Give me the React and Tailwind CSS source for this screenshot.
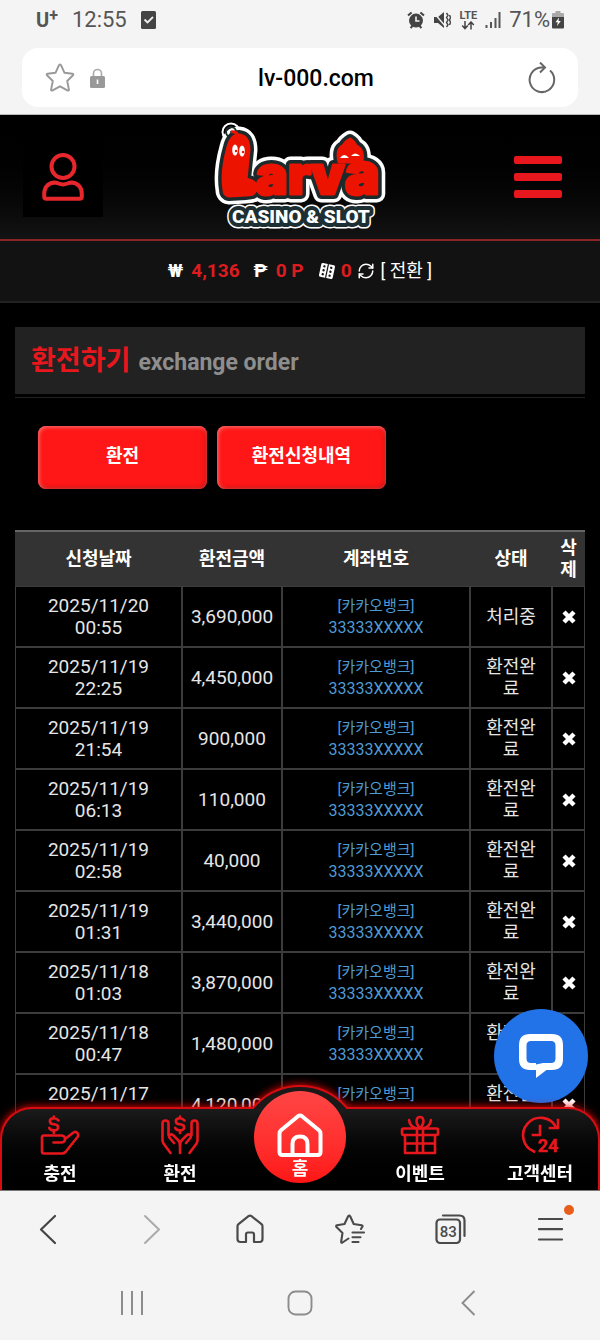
import { LuRefreshCw } from "react-icons/lu"

const rows = [
  { date: "2025/11/20", time: "00:55", amount: "3,690,000", status: "처리중" },
  { date: "2025/11/19", time: "22:25", amount: "4,450,000", status: "환전완료" },
  { date: "2025/11/19", time: "21:54", amount: "900,000", status: "환전완료" },
  { date: "2025/11/19", time: "06:13", amount: "110,000", status: "환전완료" },
  { date: "2025/11/19", time: "02:58", amount: "40,000", status: "환전완료" },
  { date: "2025/11/19", time: "01:31", amount: "3,440,000", status: "환전완료" },
  { date: "2025/11/18", time: "01:03", amount: "3,870,000", status: "환전완료" },
  { date: "2025/11/18", time: "00:47", amount: "1,480,000", status: "환전완료" },
  { date: "2025/11/17", time: "23:12", amount: "4,120,000", status: "환전완료" },
]

function StatusBar() {
  return (
    <div className="flex h-10 items-center justify-between px-9 text-[#555]">
      <div className="flex items-center gap-[14px]">
        <span className="flex items-start text-xl font-bold leading-6">
          U<span className="text-base leading-4">+</span>
        </span>
        <span className="text-[22px] leading-6">12:55</span>
        <svg viewBox="0 0 15 18" className="h-[18px] w-[15px]">
          <rect width="15" height="18" rx="1.5" fill="#444" />
          <path d="M3.5 8.5l3 3 5.5-5.5" fill="none" stroke="#eee" strokeWidth="1.8" />
        </svg>
      </div>

      <div className="flex items-center gap-2">
        <svg viewBox="0 0 18 18" className="h-[18px] w-[18px]">
          <circle cx="9" cy="9.6" r="7" fill="#444" />
          <path d="M1 4.6L4.6 1.4M17 4.6L13.4 1.4M3.5 17l2-2M14.5 17l-2-2" stroke="#444" strokeWidth="2" />
          <path d="M9 5.5V10h3.5" fill="none" stroke="#f4f4f4" strokeWidth="1.6" />
        </svg>
        <svg viewBox="0 0 18 18" className="h-[18px] w-[18px]">
          <path d="M1 6h4l6-5v16l-6-5H1z" fill="#444" />
          <path d="M1 2l12 14" stroke="#f4f4f4" strokeWidth="1.4" />
          <path d="M13.5 2l1.5 2.3-1.5 2.3L15 9l-1.5 2.4L15 13.8 13.5 16M16.5 4l1 2.5-1 2.5 1 2.5-1 2.5" fill="none" stroke="#444" strokeWidth="1.4" />
        </svg>
        <div className="flex flex-col items-center text-[11px] font-bold leading-[10px]">
          LTE
          <svg viewBox="0 0 14 9" className="h-[9px] w-[14px]">
            <path d="M4 0v7M1.2 4.6L4 7.6l2.8-3M10 8.5V1.5M7.2 4L10 1l2.8 3" fill="none" stroke="#444" strokeWidth="1.5" />
          </svg>
        </div>
        <svg viewBox="0 0 16 16" className="h-4 w-4">
          <path d="M1.5 16v-3M6 16v-6M10.5 16V6M14.5 16V0" stroke="#555" strokeWidth="2" />
        </svg>
        <span className="flex items-center gap-[2px] text-[22px] leading-6">
          71%
          <svg viewBox="0 0 12 18" className="h-[18px] w-3">
            <path d="M3.5 0h5v2H11q1 0 1 1v4H0V3q0-1 1-1h2.5z" fill="#aaa" />
            <path d="M0 6h12v10.5q0 1-1 1H1q-1 0-1-1z" fill="#444" />
            <path d="M7 6.5l-3.5 4.7h2.3L5 15l3.8-5H6.5z" fill="#fff" />
          </svg>
        </span>
      </div>
    </div>
  )
}

function AddressBar() {
  return (
    <div className="border-b border-[#bbb] px-[22px] pb-[7px] pt-2">
      <div className="flex h-[59px] items-center justify-between rounded-2xl bg-white px-[22px]">
        <div className="flex w-28 items-center gap-[14px]">
          <button aria-label="즐겨찾기">
            <svg viewBox="0 0 32 32" className="h-8 w-8">
              <path
                d="M16 2.500q.8 0 1.200 1l3.300 7.300 8 1q1.400.3.500 1.500L23.200 19l1.700 8.400q0 1.700-1.500 1L16 24.300 8.600 28.400q-1.500.7-1.500-1L8.800 19 3 13.300q-.9-1.200.5-1.500l8-1 3.300-7.300q.4-1 1.200-1z"
                fill="none" stroke="#999" strokeWidth="1.9" strokeLinejoin="round"
              />
            </svg>
          </button>
          <svg viewBox="0 0 15 20" className="h-5 w-[15px]">
            <path d="M3.5 9V5.5a4 4 0 018 0V9" fill="none" stroke="#aaa" strokeWidth="1.6" />
            <rect y="8" width="15" height="12" rx="1.5" fill="#999" />
            <path d="M7.5 11.5v4.5" stroke="#fff" strokeWidth="1.6" />
          </svg>
        </div>
        <span className="pt-[2px] text-[23px] font-medium leading-7 text-black">lv-000.com</span>
        <div className="flex w-20 justify-end">
          <button aria-label="새로고침">
            <svg viewBox="0 0 32 32" className="h-8 w-8" fill="none" stroke="#666" strokeWidth="2">
              <path d="M26 8.5A12.3 12.3 0 1117 5.5h3.500" />
              <path d="M16 .5l5 5-5 5" />
            </svg>
          </button>
        </div>
      </div>
    </div>
  )
}

function Logo() {
  return (
    <svg viewBox="0 0 176 110" className="h-[110px] w-44 overflow-visible" role="img" aria-label="Larva Casino & Slot">
      <defs>
        <path id="larva-bud" d="M127 40Q124 27 131 24 133 20 138 17 143 20 144 24 152 27 150 40z" />
        <path id="larva-body" d="M12 68Q9 50 16 25 19 13 27 13 37 14 37 28L34 57 40 59Q46 62 44 68 42 73 34 73L17 74Q12 73 12 68z" />
      </defs>
      <g fontFamily="Inter, sans-serif" fontWeight="900" strokeLinejoin="round">
        {/* outlines are the same shapes with thicker strokes */}
        <g fill="#fff" stroke="#fff" strokeWidth="17">
          <circle cx="19" cy="10" r="1" />
          <use href="#larva-bud" />
          <use href="#larva-body" />
          <use href="#larva-letters" />
        </g>
        <g fill="#1d2a2c" stroke="#1d2a2c" strokeWidth="10">
          <circle cx="19" cy="10" r="1" />
          <use href="#larva-bud" />
          <use href="#larva-body" />
          <use href="#larva-letters" />
        </g>
        <g fill="#ec1400" stroke="#ec1400" strokeWidth="3">
          <use href="#larva-bud" />
          <text id="larva-letters">
            <tspan x="13" y="72" fontSize="52">L</tspan>
            <tspan x="44" y="72" fontSize="53">a</tspan>
            <tspan x="76" y="72" fontSize="53">r</tspan>
            <tspan x="99" y="72" fontSize="53">v</tspan>
            <tspan x="133" y="72" fontSize="58">a</tspan>
          </text>
          <use href="#larva-body" />
          <path d="M26 15q-1-6-7-5" fill="none" />
        </g>
      </g>
      <g fill="#fff">
        <ellipse cx="23" cy="28" rx="2.8" ry="5.5" />
        <ellipse cx="30" cy="29" rx="2.8" ry="5.5" />
        <path d="M128 36q4-6 9 0zM139 34q4-5 9 0z" />
      </g>
      <circle cx="24" cy="29" r="1.2" fill="#ec1400" />
      <circle cx="31" cy="30" r="1.2" fill="#ec1400" />
      <g fontFamily="Roboto, sans-serif" fontWeight="900" fontSize="19" strokeLinejoin="round">
        <use href="#larva-sub" fill="#fff" stroke="#fff" strokeWidth="11" />
        <use href="#larva-sub" fill="#1d2f33" stroke="#1d2f33" strokeWidth="8" />
        <g fill="#fff">
          <text id="larva-sub" x="20" y="101">CASINO &amp; SLOT</text>
        </g>
      </g>
    </svg>
  )
}

function Header() {
  return (
    <header className="grid h-[126px] grid-cols-[1fr_auto_1fr] items-center border-b-2 border-[#8a2424] bg-gradient-to-b from-black to-[#131313] px-[23px]">
      <button aria-label="내 정보" className="flex h-20 w-20 items-center justify-center bg-black">
        <svg viewBox="0 0 42 48" className="h-12 w-[42px]" fill="none" stroke="#e8272d" strokeWidth="4">
          <ellipse cx="21" cy="13.500" rx="11.500" ry="11.500" />
          <path d="M12 29.500q-9.800 1.500-9.800 12v2q0 2.300 2.300 2.300h33q2.300 0 2.300-2.300v-2q0-10.500-9.800-12-2.500 0-4.500 1-4.500 1.800-9 0-2-1-4.500-1z" />
        </svg>
      </button>
      <Logo />
      <button aria-label="메뉴" className="mr-[15px] flex w-12 flex-col gap-[9px] justify-self-end">
        <span className="h-2 rounded-xs bg-[#e8171d]" />
        <span className="h-2 rounded-xs bg-[#e8171d]" />
        <span className="h-2 rounded-xs bg-[#e8171d]" />
      </button>
    </header>
  )
}

function BalanceBar() {
  return (
    <div className="flex h-[62px] items-center justify-center gap-[14px] border-b-2 border-[#222] bg-[#121212] text-[19px] font-bold leading-6 text-[#dd1c1f]">
      <span className="flex items-center gap-2">
        <span className="text-white">₩</span>4,136
      </span>
      <span className="flex items-center gap-2">
        <span className="text-white">₱</span>0 P
      </span>
      <span className="flex items-center gap-[5px]">
        <svg viewBox="0 0 18 18" className="h-[18px] w-[18px]">
          <g transform="rotate(12 9 9)">
            <rect x="2" y="2" width="14" height="14" rx="1.5" fill="#fff" />
            <path d="M9 2v14" stroke="#121212" strokeWidth="1.2" />
            <g fill="#121212">
              <circle cx="5.5" cy="5" r="1.2" />
              <circle cx="5.5" cy="9" r="1.2" />
              <circle cx="5.5" cy="13" r="1.2" />
              <circle cx="12.5" cy="5" r="1.2" />
              <circle cx="12.5" cy="9" r="1.2" />
              <circle cx="12.5" cy="13" r="1.2" />
            </g>
          </g>
        </svg>
        0
        <button className="flex items-center gap-[6px] font-normal text-white">
          <LuRefreshCw className="h-[18px] w-[18px]" />
          <span className="text-lg leading-6">[ 전환 ]</span>
        </button>
      </span>
    </div>
  )
}

function HistoryTable() {
  return (
    <table className="mt-[41px] w-full table-fixed border-separate border-spacing-0 text-center text-white">
      <colgroup>
        <col className="w-[167px]" />
        <col className="w-[100px]" />
        <col className="w-[188px]" />
        <col className="w-[82px]" />
        <col className="w-[33px]" />
      </colgroup>
      <thead className="bg-[#333] text-lg leading-[22px]">
        <tr className="h-14">
          <th className="border-t-2 border-[#666] font-bold">신청날짜</th>
          <th className="border-t-2 border-[#666] font-bold">환전금액</th>
          <th className="border-t-2 border-[#666] font-bold">계좌번호</th>
          <th className="border-t-2 border-[#666] font-bold">상태</th>
          <th className="border-t-2 border-[#666] px-1 font-bold">삭제</th>
        </tr>
      </thead>
      <tbody className="text-[19px] leading-[22px] text-[#e6e6e6]">
        {rows.map((row) => (
          <tr key={row.date + row.time} className="h-[61px]">
            <td className="border border-[#3c3c3c]">
              {row.date}
              <br />
              {row.time}
            </td>
            <td className="border border-[#3c3c3c]">{row.amount}</td>
            <td className="border border-[#3c3c3c] text-[15px] text-[#4f9bd3]">
              [카카오뱅크]
              <br />
              <span className="text-base leading-[22px]">33333XXXXX</span>
            </td>
            <td className="break-all border border-[#3c3c3c] px-3 text-lg leading-[22px]">{row.status}</td>
            <td className="border border-[#3c3c3c]">
              <button aria-label="삭제" className="block w-full">
                <svg viewBox="0 0 14 14" className="mx-auto h-[14px] w-[14px]">
                  <path d="M2 2l10 10M12 2L2 12" stroke="#fff" strokeWidth="4.4" />
                </svg>
              </button>
            </td>
          </tr>
        ))}
      </tbody>
    </table>
  )
}

/* Bottom menu icons */
const ChargeIcon = () => (
  <svg viewBox="0 0 40 40" className="h-10 w-10" fill="none" stroke="#e8171d" strokeWidth="2.6" strokeLinecap="round" strokeLinejoin="round">
    <path d="M18.5 5.5Q17 3.3 14 3.3c-5.5 0-5.5 5.7 0 6s5.5 6-.3 6q-3.2 0-4.500-2.500M13.800 1.500v1.800M13.800 15.300V18" />
    <path d="M13.500 27.500h7.500q4 0 4-3.500t-4-3.500H4q-2 0-2 2v14q0 2 2 2h18q2 0 3.500-1.500L37.500 22c2-3-1-6.500-4-4.500L25 24" />
  </svg>
)

const WithdrawIcon = () => (
  <svg viewBox="0 0 40 40" className="h-10 w-10" fill="none" stroke="#e8171d" strokeWidth="2.6" strokeLinecap="round" strokeLinejoin="round">
    <path d="M24.500 5.500Q23 3.300 20 3.300c-5.500 0-5.500 5.700 0 6s5.500 6-.3 6q-3.200 0-4.500-2.500M20 1.500v1.800M20 15.300V18" />
    <path d="M20 38v-8q0-3-2-5l-5-5c-2.500-2-5 1-3.300 3l4.300 5M8.500 20V8.500q0-3-3-3t-3 3V25q0 2 1 3.500l7 9.500" />
    <path d="M20 30q0-3 2-5l5-5c2.500-2 5 1 3.300 3L26 28M31.500 20V8.500q0-3 3-3t3 3V25q0 2-1 3.500l-7 9.500" />
  </svg>
)

const HomeIcon = () => (
  <svg viewBox="0 0 46 44" className="h-11 w-[46px]" fill="none" stroke="#fff" strokeWidth="4" strokeLinejoin="round">
    <path d="M2.500 20.500q0-2 1.500-3.300L21 3.200q2-1.500 4 0l17 14q1.500 1.300 1.500 3.300V39q0 3-3 3h-35q-3 0-3-3z" />
    <path d="M15.500 42V31q0-7.500 7.500-7.500t7.500 7.500v11" />
  </svg>
)

const GiftIcon = () => (
  <svg viewBox="0 0 40 40" className="h-10 w-10" fill="none" stroke="#e8171d" strokeWidth="2.6" strokeLinecap="round" strokeLinejoin="round">
    <rect x="2" y="13.500" width="36" height="6.500" rx="1.500" />
    <path d="M5 20v18h30V20M5 28.500h30M17 13.500V38M23 13.500V38" />
    <path d="M20 13.500c-6-7-3-11.500 0-11.500s6 4.500 0 11.500M9 5q1 7 8 8.500M31 5q-1 7-8 8.500" />
  </svg>
)

const SupportIcon = () => (
  <svg viewBox="0 0 40 40" className="h-10 w-10 overflow-visible" fill="none" stroke="#e8171d" strokeWidth="2.6" strokeLinecap="square">
    <path d="M14 36.500A17.500 17.500 0 1136 12" />
    <path d="M38 5v8h-8" />
    <path d="M20 11v9h-7" />
    <text x="18" y="37" fill="#e8171d" stroke="#e8171d" strokeWidth="0.5" fontSize="18" fontWeight="700" fontFamily="Roboto, sans-serif">24</text>
  </svg>
)

const menu = [
  { label: "충전", icon: ChargeIcon },
  { label: "환전", icon: WithdrawIcon },
  { label: "홈", icon: HomeIcon, home: true },
  { label: "이벤트", icon: GiftIcon },
  { label: "고객센터", icon: SupportIcon },
]

function BottomMenu() {
  return (
    <nav className="absolute inset-x-0 bottom-0 h-[83px] drop-shadow-[0_0_4px_#ff0000]">
      {/* red rim with the bump in the middle */}
      <div className="absolute inset-0 rounded-t-[32px] bg-[#d80c10]" />
      <div className="absolute -top-[22px] left-1/2 h-[124px] w-[124px] -translate-x-1/2 rounded-full border-2 border-[#d80c10] bg-[#1c1818]" />
      <div className="absolute inset-x-[2px] bottom-0 top-[2px] rounded-t-[30px] bg-gradient-to-b from-[#1b1b1b] to-black" />

      <div className="relative grid h-full grid-cols-5">
        {menu.map(({ label, icon: Icon, home }) =>
          home ? (
            <a key={label} href="#home" className="relative flex justify-center text-lg font-bold leading-6 text-white">
              <span className="absolute -top-4 flex h-[92px] w-[92px] flex-col items-center rounded-full bg-gradient-to-b from-[#ff4545] to-[#ff1414] pt-[22px]">
                <Icon />
                <span className="leading-6">{label}</span>
              </span>
            </a>
          ) : (
            <a key={label} href={"#" + label} className="flex flex-col items-center gap-[7px] pt-2 text-lg font-bold leading-6 text-white">
              <Icon />
              <span>{label}</span>
            </a>
          )
        )}
      </div>
    </nav>
  )
}

function ChatButton() {
  return (
    <button aria-label="채팅 상담" className="absolute bottom-[87px] right-3 flex h-[94px] w-[94px] items-center justify-center rounded-full bg-[#2272e8]">
      <svg viewBox="0 0 44 44" className="h-11 w-11">
        <path
          d="M11 0h22q11 0 11 11v14q0 11-11 11h-5.500L17 44v-8h-6Q0 36 0 25V11Q0 0 11 0zM12 7q-4.500 0-4.500 4.500v13Q7.500 29 12 29h5v1.500L24 29h8q4.500 0 4.500-4.500v-13Q36.500 7 32 7z"
          fill="#fff" fillRule="evenodd"
        />
      </svg>
    </button>
  )
}

function BrowserBar() {
  return (
    <div className="grid h-[76px] grid-cols-6 items-center justify-items-center border-t border-[#777]">
      <button aria-label="뒤로">
        <svg viewBox="0 0 32 32" className="h-8 w-8" fill="none" stroke="#444" strokeWidth="2.2" strokeLinecap="round" strokeLinejoin="round">
          <path d="M21 3L7 16.500 21 30" />
        </svg>
      </button>
      <button aria-label="앞으로">
        <svg viewBox="0 0 32 32" className="h-8 w-8" fill="none" stroke="#aaa" strokeWidth="2" strokeLinecap="round" strokeLinejoin="round">
          <path d="M11 3l14 13.500L11 30" />
        </svg>
      </button>
      <button aria-label="홈">
        <svg viewBox="0 0 32 32" className="h-8 w-8" fill="none" stroke="#4a4a4a" strokeWidth="2.2" strokeLinejoin="round">
          <path d="M3.500 13.500q0-1.500 1-2.300l10-8q1.500-1.200 3 0l10 8q1 .8 1 2.300V26q0 3-3 3h-5.500v-7.500q0-2-2-2h-4q-2 0-2 2V29H6.500q-3 0-3-3z" />
        </svg>
      </button>
      <button aria-label="북마크">
        <svg viewBox="0 0 32 32" className="h-8 w-8" fill="none" stroke="#4a4a4a" strokeWidth="2.1" strokeLinecap="round" strokeLinejoin="round">
          <path d="M14.500 25.500L8.500 29.500q-1.500.8-1.300-1L8.500 20 2.500 14q-1-1.200.5-1.700l7.500-1.300 3.500-7.500q1.200-1.800 2.300 0l3.400 7.500 7.800 1.300q2 .5.500 2L27 16" />
          <path d="M18.500 19.500h11.500M18.500 24.300h8M18.500 29h6" />
        </svg>
      </button>
      <button aria-label="탭 83개">
        <svg viewBox="0 0 32 32" className="h-8 w-8" fill="none" stroke="#4a4a4a" strokeWidth="2.2" strokeLinecap="round">
          <rect x="2.500" y="6.500" width="23.500" height="23.500" rx="3.500" />
          <path d="M9 2.500h16.500q5 0 5 5V23" />
          <text x="14.200" y="24" textAnchor="middle" fill="#4a4a4a" stroke="none" fontSize="15" fontWeight="500" fontFamily="Roboto, sans-serif">83</text>
        </svg>
      </button>
      <button aria-label="더보기" className="relative">
        <svg viewBox="0 0 32 32" className="h-8 w-8" fill="none" stroke="#4a4a4a" strokeWidth="2.2" strokeLinecap="round">
          <path d="M5 6h23M5 16.200h23M5 26.500h23" />
        </svg>
        <span className="absolute -right-2 -top-2 h-[10px] w-[10px] rounded-full bg-[#e85d1a]" />
      </button>
    </div>
  )
}

function SystemBar() {
  return (
    <div className="flex h-[74px] items-center justify-around px-12">
      <button aria-label="최근 앱">
        <svg viewBox="0 0 28 28" className="h-7 w-7" stroke="#8c8c8c" strokeWidth="2">
          <path d="M4 2v24M14 2v24M24 2v24" />
        </svg>
      </button>
      <button aria-label="홈 화면">
        <svg viewBox="0 0 28 28" className="h-7 w-7" fill="none" stroke="#8c8c8c" strokeWidth="1.9">
          <rect x="2.500" y="2.500" width="23" height="23" rx="7" />
        </svg>
      </button>
      <button aria-label="이전">
        <svg viewBox="0 0 28 28" className="h-7 w-7" fill="none" stroke="#8c8c8c" strokeWidth="1.9">
          <path d="M20.500 2L8.500 14l12 12" />
        </svg>
      </button>
    </div>
  )
}

export default function App() {
  return (
    <div className="flex h-screen flex-col bg-[#f4f4f4] font-[Roboto,'Noto_Sans_CJK_KR',sans-serif]">
      <StatusBar />
      <AddressBar />

      <div className="relative min-h-0 flex-1 overflow-hidden bg-black">
        <Header />
        <BalanceBar />

        <main className="px-[15px] pt-6">
          <div className="border-b border-[#222] pb-[3px]">
            <h1 className="flex h-[67px] items-center gap-2 bg-[#222] px-4 font-bold">
              <span className="text-[27px] leading-8 text-[#e8171d]">환전하기</span>
              <span className="pt-1 text-[23px] leading-8 text-[#8e8e8e]">exchange order</span>
            </h1>
          </div>

          <div className="mt-7 flex gap-[10px] px-[23px] text-lg font-bold leading-6 text-white">
            <button className="h-[63px] w-[169px] rounded-lg bg-[#ff1616] pb-[3px] shadow-[inset_1px_1px_4px_#ff7a7a,inset_-1px_-1px_4px_#a81010]">환전</button>
            <button className="h-[63px] w-[169px] rounded-lg bg-[#ff1616] pb-[3px] shadow-[inset_1px_1px_4px_#ff7a7a,inset_-1px_-1px_4px_#a81010]">환전신청내역</button>
          </div>

          <HistoryTable />
        </main>

        <ChatButton />
        <BottomMenu />
      </div>

      <BrowserBar />
      <SystemBar />
    </div>
  )
}
